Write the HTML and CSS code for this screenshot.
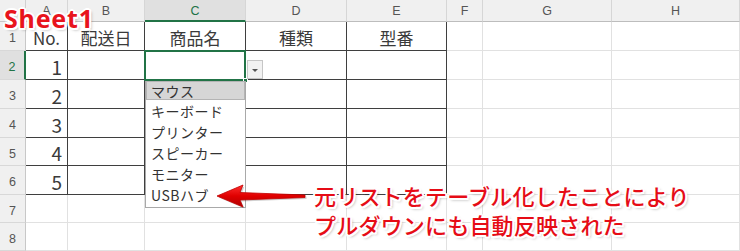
FILE: index.html
```html
<!DOCTYPE html>
<html lang="ja">
<head>
    <meta charset="UTF-8">
    <title>プルダウンリスト</title>
    <link rel="stylesheet" href="styles.css">
</head>
<body>
    <div class="sheet">
        <div class="grid">
            <div class="corner"></div>
            <div class="ch">A</div>
            <div class="ch">B</div>
            <div class="ch sel">C</div>
            <div class="ch">D</div>
            <div class="ch">E</div>
            <div class="ch">F</div>
            <div class="ch">G</div>
            <div class="ch">H</div>

            <div class="rh">1</div>
            <div class="c t head">No.</div>
            <div class="c t head">配送日</div>
            <div class="c t head">商品名</div>
            <div class="c t head">種類</div>
            <div class="c t head">型番</div>
            <div class="c"></div>
            <div class="c"></div>
            <div class="c"></div>

            <div class="rh sel">2</div>
            <div class="c t num">1</div>
            <div class="c t"></div>
            <div class="c t"></div>
            <div class="c t"></div>
            <div class="c t"></div>
            <div class="c"></div>
            <div class="c"></div>
            <div class="c"></div>

            <div class="rh">3</div>
            <div class="c t num">2</div>
            <div class="c t"></div>
            <div class="c t"></div>
            <div class="c t"></div>
            <div class="c t"></div>
            <div class="c"></div>
            <div class="c"></div>
            <div class="c"></div>

            <div class="rh">4</div>
            <div class="c t num">3</div>
            <div class="c t"></div>
            <div class="c t"></div>
            <div class="c t"></div>
            <div class="c t"></div>
            <div class="c"></div>
            <div class="c"></div>
            <div class="c"></div>

            <div class="rh">5</div>
            <div class="c t num">4</div>
            <div class="c t"></div>
            <div class="c t"></div>
            <div class="c t"></div>
            <div class="c t"></div>
            <div class="c"></div>
            <div class="c"></div>
            <div class="c"></div>

            <div class="rh">6</div>
            <div class="c t num">5</div>
            <div class="c t"></div>
            <div class="c t"></div>
            <div class="c t"></div>
            <div class="c t"></div>
            <div class="c"></div>
            <div class="c"></div>
            <div class="c"></div>

            <div class="rh">7</div>
            <div class="c"></div>
            <div class="c"></div>
            <div class="c"></div>
            <div class="c"></div>
            <div class="c"></div>
            <div class="c"></div>
            <div class="c"></div>
            <div class="c"></div>

            <div class="rh">8</div>
            <div class="c"></div>
            <div class="c"></div>
            <div class="c"></div>
            <div class="c"></div>
            <div class="c"></div>
            <div class="c"></div>
            <div class="c"></div>
            <div class="c"></div>
        </div>

        <!-- active cell C2 and its list -->
        <div class="active-cell"><span class="fill-handle"></span></div>
        <div class="drop-btn"><span class="caret"></span></div>
        <ul class="drop-list">
            <li class="hover">マウス</li>
            <li>キーボード</li>
            <li>プリンター</li>
            <li>スピーカー</li>
            <li>モニター</li>
            <li>USBハブ</li>
        </ul>

        <div class="sheet-label">Sheet1</div>

        <svg class="arrow" width="96" height="30" viewBox="0 0 96 30">
            <defs>
                <linearGradient id="arrowFill" x1="0" y1="0" x2="0" y2="1">
                    <stop offset="0" stop-color="#ff3030"/>
                    <stop offset="0.5" stop-color="#e00000"/>
                    <stop offset="1" stop-color="#b00000"/>
                </linearGradient>
            </defs>
            <path d="M2 16 L28 5 L25 12.5 L90 15 L90 17.5 L25 20 L28 27 Z" fill="#000" opacity="0.18" transform="translate(1.5 1.5)"/>
            <path d="M2 16 L28 5 L25 12.5 L90 15 L90 17.5 L25 20 L28 27 Z" fill="url(#arrowFill)" stroke="#c00000" stroke-width="0.8" stroke-linejoin="round"/>
        </svg>

        <div class="note">
            元リストをテーブル化したことにより<br>
            プルダウンにも自動反映された
        </div>
    </div>
</body>
</html>
```

FILE: styles.css
```css
* {
    margin: 0;
    padding: 0;
    box-sizing: border-box;
}

body {
    font-family: "Noto Sans CJK JP", "Noto Sans", sans-serif;
    background: #fff;
    color: #222;
    width: 740px;
    height: 251px;
    overflow: hidden;
}

.sheet {
    position: relative;
    width: 740px;
    height: 251px;
}

.grid {
    display: grid;
    grid-template-columns: 26px 42px 77px 101px 101px 100px 36px 129px 128px;
    grid-template-rows: 22px 29px 29px 29px 29px 28px 29px 28px 28px;
}

.corner {
    background: #f0f0f0;
    border-right: 1px solid #d0d0d0;
    border-bottom: 1px solid #c8c8c8;
}

.ch {
    background: #f0f0f0;
    border-right: 1px solid #d6d6d6;
    border-bottom: 1px solid #bdbdbd;
    display: flex;
    align-items: center;
    justify-content: center;
    font-family: "Liberation Sans", Arial, sans-serif;
    font-size: 12.5px;
    color: #555;
    padding-top: 1px;
}

.ch.sel {
    background: #e0e0e0;
    color: #217346;
    border-bottom: 2px solid #217346;
}

.rh {
    background: #f0f0f0;
    border-right: 1px solid #c8c8c8;
    border-bottom: 1px solid #d8d8d8;
    display: flex;
    align-items: center;
    justify-content: center;
    font-family: "Liberation Sans", Arial, sans-serif;
    font-size: 12.5px;
    color: #555;
    padding-top: 4px;
}

.rh.sel {
    background: #e0e0e0;
    color: #217346;
    border-right: 2px solid #217346;
}

.c {
    border-right: 1px solid #e1e1e1;
    border-bottom: 1px solid #e1e1e1;
    display: flex;
    align-items: center;
}

.c.t {
    border-right-color: #3f3f3f;
    border-bottom-color: #3f3f3f;
}

.head {
    justify-content: center;
    font-size: 17px;
    color: #3a3a3a;
    padding-top: 2px;
}

.num {
    justify-content: flex-end;
    padding-right: 5px;
    font-size: 19px;
    color: #3a3a3a;
    padding-top: 2px;
}

.active-cell {
    position: absolute;
    left: 144px;
    top: 50px;
    width: 102px;
    height: 31px;
    border: 2px solid #217346;
}

.fill-handle {
    position: absolute;
    right: -4px;
    bottom: -4px;
    width: 5px;
    height: 5px;
    background: #217346;
    border: 1px solid #fff;
}

.drop-btn {
    position: absolute;
    left: 247px;
    top: 60px;
    width: 16px;
    height: 19px;
    background: #f2f2f2;
    border: 1px solid #c6c6c6;
    display: flex;
    align-items: center;
    justify-content: center;
}

.caret {
    width: 0;
    height: 0;
    border-left: 3px solid transparent;
    border-right: 3px solid transparent;
    border-top: 3px solid #555;
    margin-top: 1px;
}

.drop-list {
    position: absolute;
    left: 145px;
    top: 81px;
    width: 101px;
    height: 127px;
    list-style: none;
    background: #fff;
    border: 1px solid #a9a9a9;
    border-top: none;
}

.drop-list li {
    height: 21px;
    line-height: 20px;
    padding-left: 5px;
    font-size: 14px;
    color: #333;
    letter-spacing: 0.5px;
}

.drop-list li.hover {
    height: 19px;
    line-height: 18px;
    margin-bottom: 1px;
    background: #d6d6d6;
    border: 1px solid #b4b4b4;
    padding-left: 4px;
}

.sheet-label {
    position: absolute;
    left: 4px;
    top: 3px;
    font-family: "Noto Sans", "Noto Sans CJK JP", sans-serif;
    font-weight: 700;
    font-size: 25px;
    line-height: 30px;
    letter-spacing: 0.8px;
    color: #e8141c;
    text-shadow:
        2px 0 0 #fff, -2px 0 0 #fff, 0 2px 0 #fff, 0 -2px 0 #fff,
        1.5px 1.5px 0 #fff, -1.5px -1.5px 0 #fff, 1.5px -1.5px 0 #fff, -1.5px 1.5px 0 #fff,
        2px 2px 3px rgba(0, 0, 0, 0.35);
}

.arrow {
    position: absolute;
    left: 215px;
    top: 180px;
}

.note {
    position: absolute;
    left: 314px;
    top: 181px;
    font-size: 22px;
    line-height: 29px;
    font-weight: 500;
    color: #e60c16;
    letter-spacing: 0.2px;
    text-shadow:
        2px 0 0 #fff, -2px 0 0 #fff, 0 2px 0 #fff, 0 -2px 0 #fff,
        1.5px 1.5px 0 #fff, -1.5px -1.5px 0 #fff, 1.5px -1.5px 0 #fff, -1.5px 1.5px 0 #fff,
        2px 2px 3px rgba(0, 0, 0, 0.35);
}
```
